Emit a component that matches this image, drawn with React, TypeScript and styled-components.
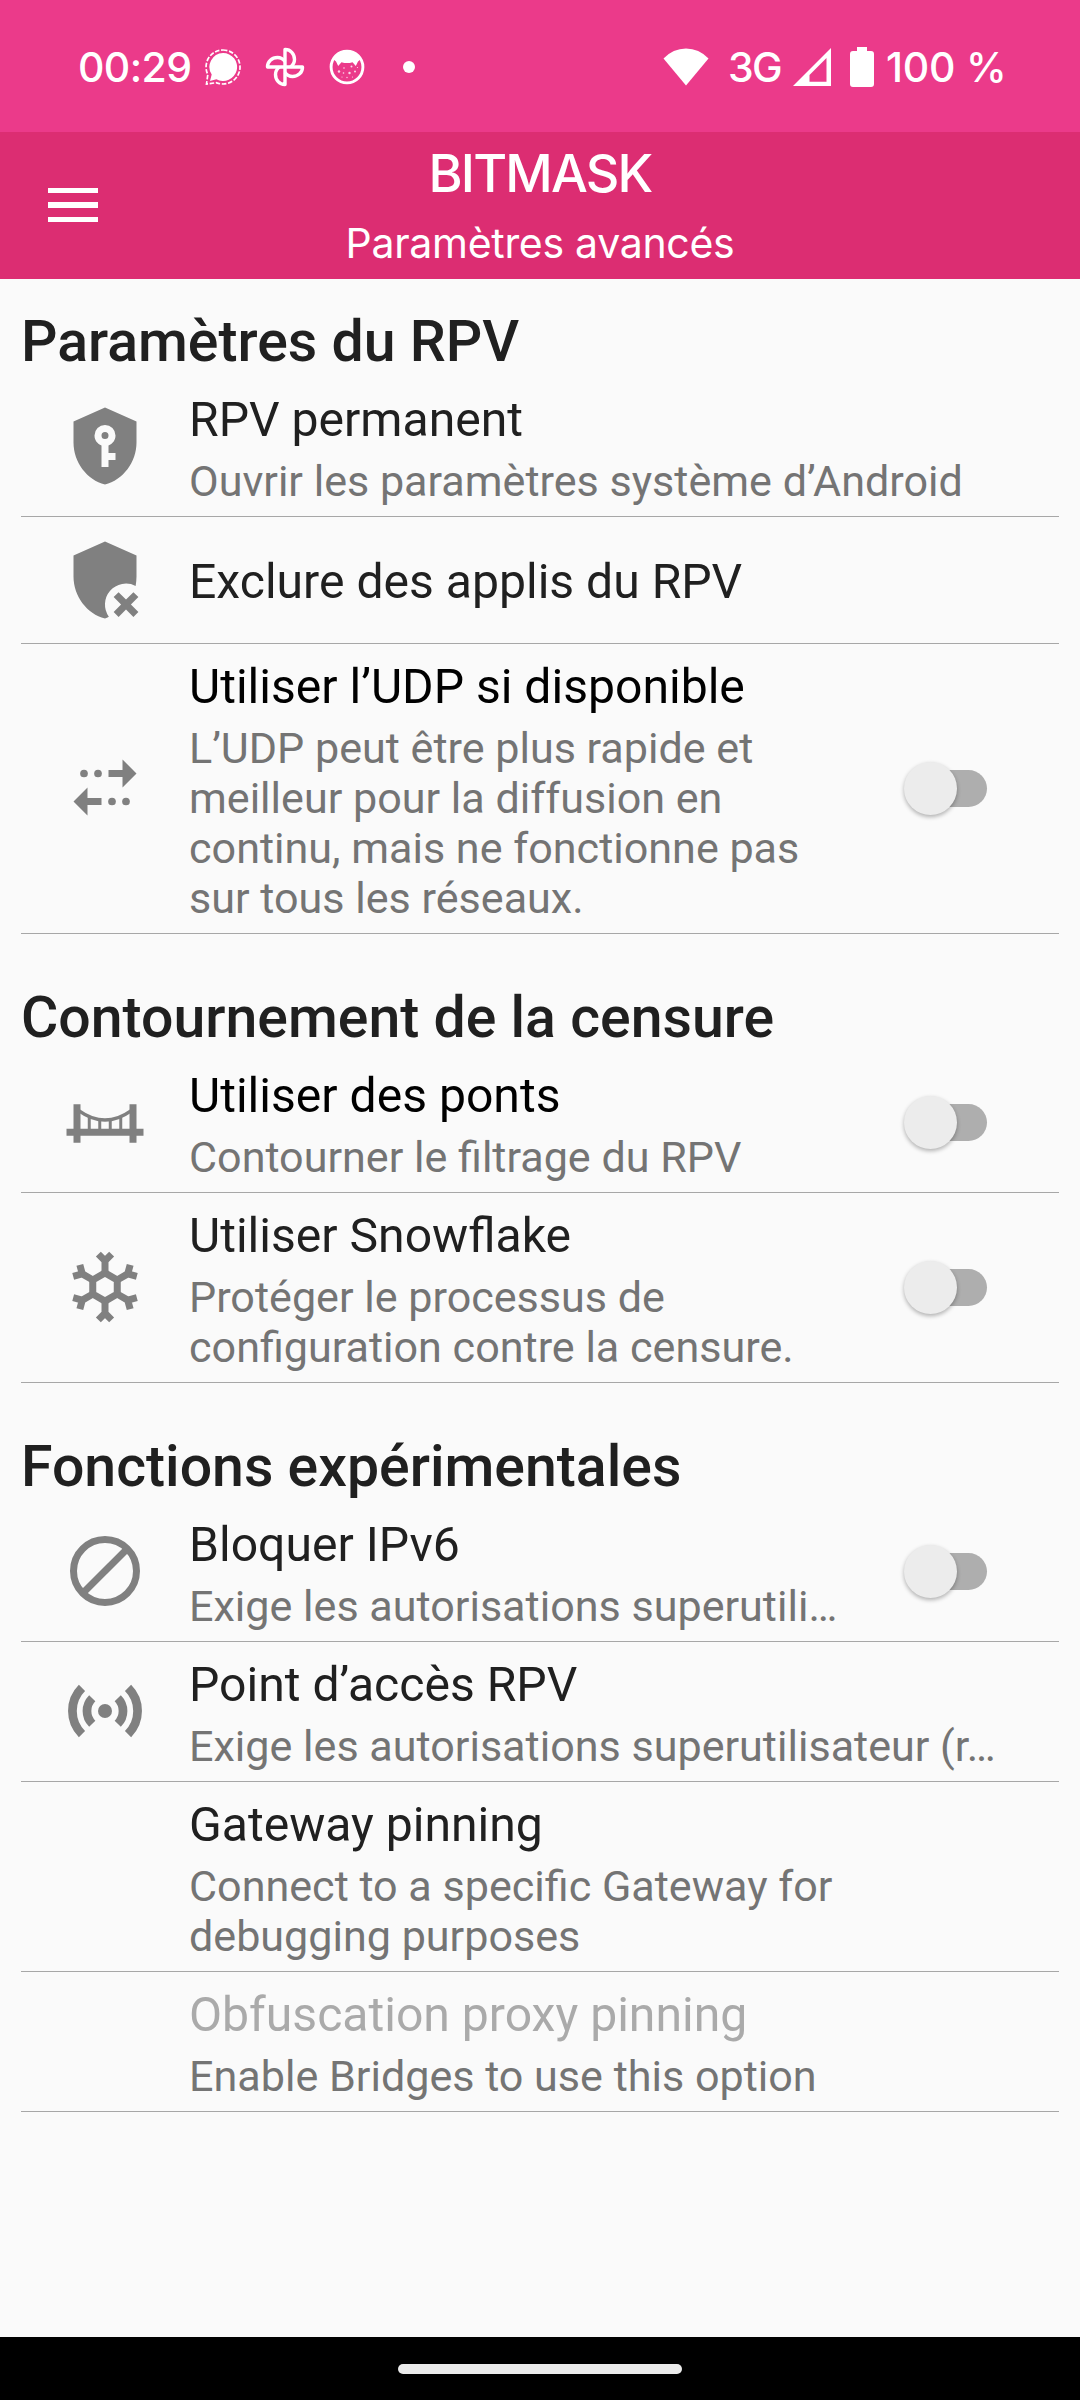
import React from "react";
import styled, { createGlobalStyle } from "styled-components";

const GlobalStyle = createGlobalStyle`
  *, *::before, *::after { box-sizing: border-box; }
  body { margin: 0; background: #fafafa; }
`;

const Screen = styled.div`
  display: flex;
  flex-direction: column;
  width: 1080px;
  height: 2400px;
  background: #fafafa;
  font-family: Roboto, "Liberation Sans", sans-serif;
`;

const StatusBar = styled.header`
  display: flex;
  justify-content: space-between;
  align-items: center;
  height: 132px;
  flex: none;
  padding: 2px 73px 0 78px;
  background: #eb3a8a;
  color: #fff;
  font-family: Inter, Roboto, sans-serif;
`;

const StatusGroup = styled.div`
  display: flex;
  align-items: center;
`;

const StatusText = styled.span<{ $spacing?: number; $width?: number; $gap?: number }>`
  width: ${(p) => (p.$width ? `${p.$width}px` : "auto")};
  margin-left: ${(p) => p.$gap ?? 0}px;
  font-size: 41px;
  line-height: 48px;
  font-weight: 550;
  letter-spacing: ${(p) => p.$spacing ?? 0}px;
  white-space: nowrap;
`;

const StatusIcon = styled.svg<{ $gap?: number }>`
  display: block;
  flex: none;
  margin-left: ${(p) => p.$gap ?? 0}px;
`;

const Toolbar = styled.div`
  display: grid;
  grid-template-columns: 147px 1fr 147px;
  align-items: center;
  height: 147px;
  flex: none;
  background: #dc2d72;
  color: #fff;
`;

const MenuButton = styled.button`
  display: flex;
  flex-direction: column;
  gap: 9px;
  width: 50px;
  margin: 0 0 1px 48px;
  padding: 0;
  border: 0;
  background: none;
`;

const MenuBar = styled.span`
  height: 5.3px;
  background: #fff;
`;

const Titles = styled.div`
  display: flex;
  flex-direction: column;
  align-items: center;
  font-family: Inter, Roboto, sans-serif;
`;

const AppTitle = styled.h1`
  margin: 0;
  font-size: 52px;
  line-height: 66px;
  font-weight: 550;
  letter-spacing: -1.8px;
`;

const AppSubtitle = styled.div`
  margin-top: 9px;
  font-size: 41px;
  line-height: 54px;
  letter-spacing: -0.3px;
`;

const Content = styled.main`
  flex: 1;
  padding: 0 21px;
`;

const Section = styled.section`
  padding-top: 29px;
  & + & { padding-top: 50px; }
`;

const SectionTitle = styled.h2`
  margin: 0;
  padding-bottom: 1px;
  font-size: 57.2px;
  line-height: 68px;
  font-weight: 500;
  color: #202020;
  white-space: nowrap;
`;

const Row = styled.div<{ $single?: boolean }>`
  display: flex;
  align-items: center;
  min-height: ${(p) => (p.$single ? 127 : 140)}px;
  padding: 0 42px;
  border-bottom: 1px solid #a7a7a7;
`;

const IconSlot = styled.div`
  width: 84px;
  height: 84px;
  flex: none;
  margin: 0 42px 1px 0;
  color: #808080;
`;

const Label = styled.div<{ $single?: boolean }>`
  flex: 1;
  min-width: 0;
  padding: ${(p) => (p.$single ? 12 : 11)}px 0 9px;
`;

const ItemTitle = styled.div<{ $color?: string }>`
  font-size: 48.1px;
  line-height: 63px;
  color: ${(p) => p.$color ?? "#202020"};
  white-space: nowrap;
`;

const ItemNote = styled.div`
  margin-top: 6px;
  font-size: 43.1px;
  line-height: 50px;
  color: #747474;
`;

const Switch = styled.div`
  position: relative;
  width: 90px;
  height: 54px;
  flex: none;
  margin: 0 22px 0 60px;
`;

const Track = styled.span`
  position: absolute;
  left: 16px;
  top: 8px;
  width: 66px;
  height: 37px;
  border-radius: 19px;
  background: #aeaeae;
`;

const Thumb = styled.span`
  position: absolute;
  left: -1px;
  top: 0;
  width: 53px;
  height: 53px;
  border-radius: 50%;
  background: #ececec;
  box-shadow: 0 2px 4px rgba(0, 0, 0, 0.3);
`;

const NavBar = styled.footer`
  display: flex;
  justify-content: center;
  align-items: center;
  height: 63px;
  flex: none;
  background: #000;
`;

const NavHandle = styled.span`
  width: 284px;
  height: 10px;
  border-radius: 5px;
  background: #ebebeb;
`;

const Glyph = ({ children }: { children: React.ReactNode }) => (
  <svg width="84" height="84" viewBox="0 0 24 24" fill="currentColor">{children}</svg>
);

const ShieldKey = () => (
  <Glyph>
    <path fillRule="evenodd" d="M12 8a1 1 0 0 1 1 1 1 1 0 0 1-1 1 1 1 0 0 1-1-1 1 1 0 0 1 1-1m9-3v6c0 5.55-3.84 10.74-9 12-5.16-1.26-9-6.45-9-12V5l9-4 9 4m-9 1a3 3 0 0 0-3 3c0 1.31.83 2.42 2 2.83V18h2v-2h2v-2h-2v-2.17c1.17-.41 2-1.52 2-2.83a3 3 0 0 0-3-3z" />
  </Glyph>
);

const ShieldRemove = () => (
  <Glyph>
    <path d="M12 1L3 5v6c0 5.55 3.84 10.74 9 12 .4-.1.75-.25 1.1-.5A6 6 0 0 1 20.75 13.7C20.9 12.8 21 11.9 21 11V5z" />
    <path d="M21.54 16.88l-1.42-1.41L18 17.59l-2.12-2.12-1.41 1.41L16.59 19l-2.12 2.12 1.41 1.42L18 20.41l2.12 2.13 1.42-1.42L19.41 19z" />
  </Glyph>
);

const Transfer = () => (
  <Glyph>
    <path d="M13 6.85h4V3.85l4 4-4 4v-3h-4zM11 16.85H7v3l-4-4 4-4v3h4z" />
    <circle cx="6" cy="7.85" r="1.1" />
    <circle cx="10" cy="7.85" r="1.1" />
    <circle cx="14" cy="15.85" r="1.1" />
    <circle cx="18" cy="15.85" r="1.1" />
  </Glyph>
);

const Bridge = () => (
  <Glyph>
    <path d="M3 6.9h2v7h14v-7h2v7h2v2h-2v2h-2v-2H5v2H3v-2H1v-2h2z" />
    <path d="M4.6 8.8Q12 14.1 19.4 8.8" fill="none" stroke="currentColor" strokeWidth="1" />
    <path d="M7.5 10.3V14M10.5 11.3V14M13.5 11.3V14M16.5 10.3V14" stroke="currentColor" strokeWidth=".85" />
  </Glyph>
);

const Snowflake = () => (
  <Glyph>
    <g fill="none" stroke="currentColor" strokeWidth="2">
      <path d="M12 7.96l3.5 2.02v4.04L12 16.04l-3.5-2.02V9.98z" />
      {[0, 60, 120, 180, 240, 300].map((a) => (
        <path key={a} transform={`rotate(${a} 12 12)`} d="M12 8V4.5M10.1 2.6L12 4.5l1.9-1.9" />
      ))}
    </g>
  </Glyph>
);

const Block = () => (
  <Glyph>
    <g fill="none" stroke="currentColor" strokeWidth="2">
      <circle cx="12" cy="12" r="9" />
      <path d="M5.7 18.3L18.3 5.7" />
    </g>
  </Glyph>
);

const Hotspot = () => (
  <Glyph>
    <circle cx="12" cy="12" r="2" />
    <g fill="none" stroke="currentColor" strokeWidth="2.5">
      <path d="M8.36 15.64a5.15 5.15 0 0 1 0-7.28M15.64 8.36a5.15 5.15 0 0 1 0 7.28" />
      <path d="M5.42 18.58a9.3 9.3 0 0 1 0-13.16M18.58 5.42a9.3 9.3 0 0 1 0 13.16" />
    </g>
  </Glyph>
);

type Item = {
  title: string;
  note?: string;
  icon?: React.ReactNode;
  toggle?: boolean;
  color?: string;
};

const sections: { title: string; items: Item[] }[] = [
  {
    title: "Paramètres du RPV",
    items: [
      { title: "RPV permanent", note: "Ouvrir les paramètres système d’Android", icon: <ShieldKey /> },
      { title: "Exclure des applis du RPV", icon: <ShieldRemove /> },
      {
        title: "Utiliser l’UDP si disponible",
        note: "L’UDP peut être plus rapide et meilleur pour la diffusion en continu, mais ne fonctionne pas sur tous les réseaux.",
        icon: <Transfer />,
        toggle: true,
        color: "#000",
      },
    ],
  },
  {
    title: "Contournement de la censure",
    items: [
      { title: "Utiliser des ponts", note: "Contourner le filtrage du RPV", icon: <Bridge />, toggle: true, color: "#000" },
      {
        title: "Utiliser Snowflake",
        note: "Protéger le processus de configuration contre la censure.",
        icon: <Snowflake />,
        toggle: true,
      },
    ],
  },
  {
    title: "Fonctions expérimentales",
    items: [
      { title: "Bloquer IPv6", note: "Exige les autorisations superutili…", icon: <Block />, toggle: true },
      { title: "Point d’accès RPV", note: "Exige les autorisations superutilisateur (r…", icon: <Hotspot /> },
      { title: "Gateway pinning", note: "Connect to a specific Gateway for debugging purposes" },
      { title: "Obfuscation proxy pinning", note: "Enable Bridges to use this option", color: "#aaaaaa" },
    ],
  },
];

const SettingRow = ({ item }: { item: Item }) => (
  <Row $single={!item.note}>
    <IconSlot>{item.icon}</IconSlot>
    <Label $single={!item.note}>
      <ItemTitle $color={item.color}>{item.title}</ItemTitle>
      {item.note && <ItemNote>{item.note}</ItemNote>}
    </Label>
    {item.toggle && (
      <Switch role="switch" aria-checked="false">
        <Track />
        <Thumb />
      </Switch>
    )}
  </Row>
);

export default function App() {
  return (
    <Screen>
      <GlobalStyle />
      <StatusBar>
        <StatusGroup>
          <StatusText $width={126} $spacing={-0.6}>00:29</StatusText>
          <StatusIcon width="38" height="38" viewBox="0 0 38 38">
            <path d="M19 5a14 14 0 1 1-6.6 26.300L6 33l1.700-6.400A14 14 0 0 1 19 5z" fill="#fff" />
            <path d="M19 2a17 17 0 1 1-6.500 32.700L2.500 36l1.300-9.500A17 17 0 0 1 19 2z" fill="none" stroke="#fff" strokeWidth="1.700" strokeDasharray="4.500 1.700" />
          </StatusIcon>
          <StatusIcon $gap={23} width="40" height="40" viewBox="0 0 40 40">
            <g fill="none" stroke="#fff" strokeWidth="3.400" strokeLinejoin="round">
              {[0, 90, 180, 270].map((a) => (
                <path key={a} transform={`rotate(${a} 20 20)`} d="M20 20V2.500C25.500 2.300 29.500 7 29.500 12.500c0 3-1.300 5.500-4 7.500" />
              ))}
            </g>
          </StatusIcon>
          <StatusIcon $gap={23} width="38" height="38" viewBox="0 0 38 38">
            <circle cx="19" cy="19" r="15.900" fill="none" stroke="#fff" strokeWidth="2.900" />
            <path d="M5 11A16 16 0 0 1 33 11L30 13.500 27.800 18 24.500 14.200Q19 16 13.500 14.200L10.200 18 8 13.500z" fill="#fff" />
            <g fill="#fff" fillOpacity=".8">
              <circle cx="11" cy="23.500" r="1.200" />
              <circle cx="16" cy="20" r=".8" />
              <circle cx="15.500" cy="25" r=".8" />
              <circle cx="21.500" cy="25" r="1.200" />
              <circle cx="23.500" cy="18.500" r="1" />
              <circle cx="27" cy="23.500" r="1" />
              <circle cx="19" cy="29.500" r=".7" />
              <circle cx="14" cy="29" r=".6" />
              <circle cx="24.500" cy="29" r=".6" />
              <circle cx="29.500" cy="19.500" r=".6" />
            </g>
          </StatusIcon>
          <StatusIcon $gap={37} width="12" height="12" viewBox="0 0 12 12">
            <circle cx="6" cy="6" r="6" fill="#fff" />
          </StatusIcon>
        </StatusGroup>
        <StatusGroup>
          <StatusIcon width="46" height="40" viewBox="0 0 46 40">
            <path d="M.5 11.500Q10 1.500 23 1.500T45.500 11.500L23 38.500z" fill="#fff" />
          </StatusIcon>
          <StatusText $spacing={-1.6} $width={65} $gap={19}>3G</StatusText>
          <StatusIcon width="38" height="38" viewBox="0 0 38 38">
            <path fillRule="evenodd" d="M38 0v38H0zM33.500 10L16.500 27V33.800H33.500z" fill="#fff" />
          </StatusIcon>
          <StatusIcon $gap={19} width="24" height="40" viewBox="0 0 24 40">
            <path d="M7 0h10v4h4a3 3 0 0 1 3 3v30a3 3 0 0 1-3 3H3a3 3 0 0 1-3-3V7a3 3 0 0 1 3-3h4z" fill="#fff" />
          </StatusIcon>
          <StatusText $gap={12} $width={121} $spacing={-0.2}>100 %</StatusText>
        </StatusGroup>
      </StatusBar>
      <Toolbar>
        <MenuButton aria-label="Menu">
          <MenuBar />
          <MenuBar />
          <MenuBar />
        </MenuButton>
        <Titles>
          <AppTitle>BITMASK</AppTitle>
          <AppSubtitle>Paramètres avancés</AppSubtitle>
        </Titles>
      </Toolbar>
      <Content>
        {sections.map((s) => (
          <Section key={s.title}>
            <SectionTitle>{s.title}</SectionTitle>
            {s.items.map((item) => (
              <SettingRow key={item.title} item={item} />
            ))}
          </Section>
        ))}
      </Content>
      <NavBar>
        <NavHandle />
      </NavBar>
    </Screen>
  );
}
